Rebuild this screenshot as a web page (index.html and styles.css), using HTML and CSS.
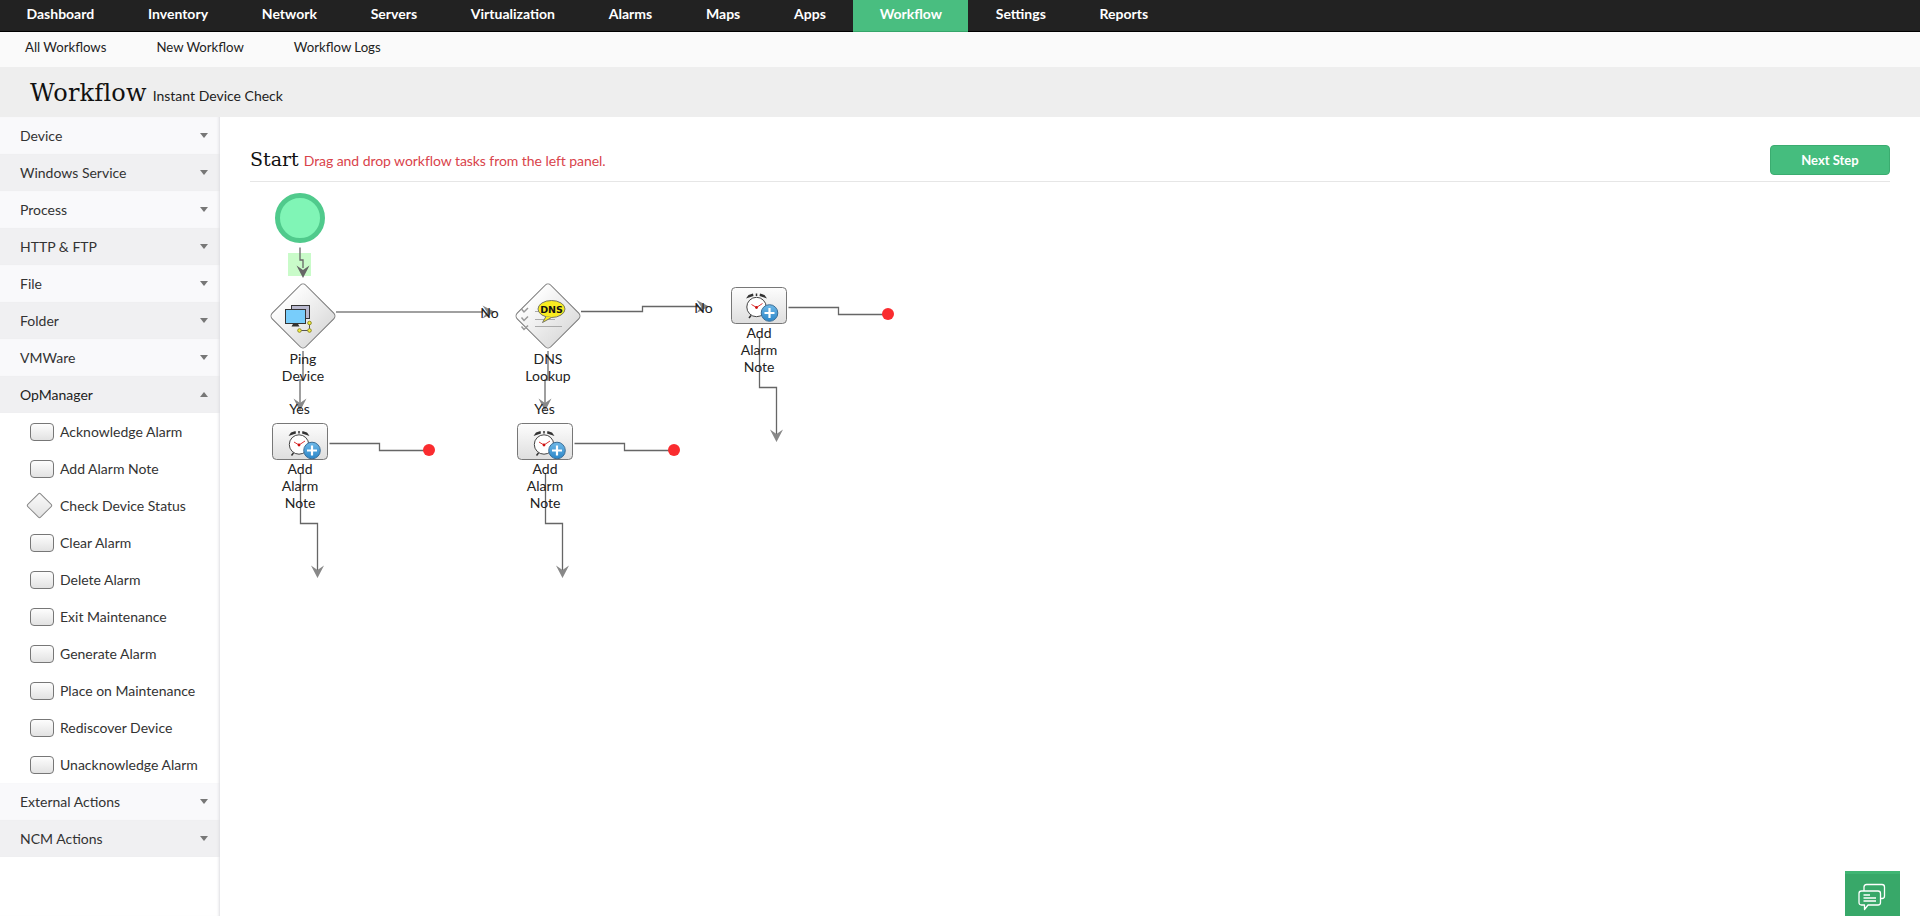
FILE: index.html
```html
<!DOCTYPE html>
<html lang="en">
<head>
    <meta charset="UTF-8">
    <meta name="viewport" content="width=device-width, initial-scale=1.0">
    <title>Workflow - Instant Device Check</title>
    <link rel="stylesheet" href="styles.css">
</head>
<body>
    <nav class="main-nav">
        <a>Dashboard</a>
        <a>Inventory</a>
        <a>Network</a>
        <a>Servers</a>
        <a>Virtualization</a>
        <a>Alarms</a>
        <a>Maps</a>
        <a>Apps</a>
        <a class="active">Workflow</a>
        <a>Settings</a>
        <a>Reports</a>
    </nav>
    <nav class="sub-nav">
        <a>All Workflows</a>
        <a>New Workflow</a>
        <a>Workflow Logs</a>
    </nav>
    <header class="page-title">
        <h1>Workflow</h1>
        <span>Instant Device Check</span>
    </header>

    <div class="content">
        <aside class="sidebar">
            <div class="group">Device</div>
            <div class="group alt">Windows Service</div>
            <div class="group">Process</div>
            <div class="group alt">HTTP &amp; FTP</div>
            <div class="group">File</div>
            <div class="group alt">Folder</div>
            <div class="group">VMWare</div>
            <div class="group alt open">OpManager</div>
            <div class="task"><i class="box"></i>Acknowledge Alarm</div>
            <div class="task"><i class="box"></i>Add Alarm Note</div>
            <div class="task"><i class="diamond"></i>Check Device Status</div>
            <div class="task"><i class="box"></i>Clear Alarm</div>
            <div class="task"><i class="box"></i>Delete Alarm</div>
            <div class="task"><i class="box"></i>Exit Maintenance</div>
            <div class="task"><i class="box"></i>Generate Alarm</div>
            <div class="task"><i class="box"></i>Place on Maintenance</div>
            <div class="task"><i class="box"></i>Rediscover Device</div>
            <div class="task"><i class="box"></i>Unacknowledge Alarm</div>
            <div class="group">External Actions</div>
            <div class="group alt">NCM Actions</div>
        </aside>

        <main class="editor">
            <div class="editor-head">
                <h2>Start</h2>
                <span class="hint">Drag and drop workflow tasks from the left panel.</span>
                <button class="next">Next Step</button>
            </div>

            <svg class="canvas" width="1700" height="734" viewBox="220 182 1700 734">
                <defs>
                    <linearGradient id="fill" x1="0" y1="0" x2="0" y2="1">
                        <stop offset="0" stop-color="#fdfdfd"/>
                        <stop offset="1" stop-color="#dedede"/>
                    </linearGradient>
                    <linearGradient id="fill-diamond" x1="0" y1="0" x2="1" y2="0">
                        <stop offset="0" stop-color="#fdfdfd"/>
                        <stop offset="1" stop-color="#dedede"/>
                    </linearGradient>
                    <linearGradient id="blue" x1="0" y1="0" x2="0" y2="1">
                        <stop offset="0" stop-color="#6fb9e8"/>
                        <stop offset="1" stop-color="#2b86c8"/>
                    </linearGradient>
                    <path id="arrow" d="M-6.500 -12.500L0 -8L6.500 -12.500L0 0Z"/>

                    <!-- decision node with its "yes" branch -->
                    <g id="decision">
                        <rect class="shape tilted" x="279.250" y="292.250" width="47.500" height="47.500" rx="4" transform="rotate(45 303 316)"/>
                    </g>
                    <g id="yes">
                        <path class="line soft" d="M303 351V380H300V403"/>
                        <use href="#arrow" class="head" x="300" y="411"/>
                    </g>

                    <g id="clock">
                        <circle cx="299" cy="444.500" r="9.700" fill="#fff" stroke="#444"/>
                        <path d="M288.500 436L291 432.500L295.500 431L296 433.500ZM309.500 436L307 432.500L302.500 431L302 433.500Z" fill="#333"/>
                        <path d="M299 431V433.500M293.500 453L291.500 455.500" stroke="#333" stroke-width="1.500"/>
                        <path d="M294 442L299 445L305 441" fill="none" stroke="#d33"/>
                        <circle cx="299" cy="445" r="1.400" fill="#c11"/>
                        <circle cx="312" cy="450.500" r="8.300" fill="url(#blue)" stroke="#3a6d96"/>
                        <path d="M312 445.500V455.500M307 450.500H317" stroke="#fff" stroke-width="2.200"/>
                    </g>

                    <!-- alarm note node with both exits -->
                    <g id="note">
                        <rect class="shape" x="272.500" y="423.500" width="55" height="36" rx="4"/>
                        <path class="line" d="M329.500 443.500H379.500V450.500H424"/>
                        <circle cx="429" cy="450" r="6" fill="#fa2c2f"/>
                        <path class="line" d="M300.500 474V523.500H317.500V570"/>
                        <use href="#arrow" class="head" x="317.500" y="578"/>
                        <text x="300" y="474">Add</text>
                        <text x="300" y="491">Alarm</text>
                        <text x="300" y="508">Note</text>
                    </g>
                </defs>

                <rect x="288" y="253" width="23" height="23" fill="#c9fbc9"/>
                <circle cx="300" cy="218" r="22.500" fill="#80f5b6" stroke="#50ca8c" stroke-width="5"/>
                <path class="line" d="M300 247.500V260H303V268"/>
                <use href="#arrow" class="head dark" x="303" y="278"/>

                <!-- ping device -->
                <use href="#decision"/>
                <rect x="291.500" y="305.500" width="18" height="13" fill="#b9b9cf" stroke="#333"/>
                <rect x="285.500" y="309.500" width="20" height="14" fill="#78cdfb" stroke="#333"/>
                <path d="M293 324H298L299.500 326.500H291.500Z" fill="#333"/>
                <path d="M309.500 323V330.500H299.500" fill="none" stroke="#555"/>
                <g fill="#f4ee3a" stroke="#8d8a2a">
                    <circle cx="309.500" cy="323" r="1.800"/>
                    <circle cx="309.500" cy="330.500" r="1.800"/>
                    <circle cx="299.500" cy="330.500" r="1.800"/>
                </g>
                <use href="#yes"/>
                <path class="line thick" d="M336 312H483"/>
                <use href="#arrow" class="head" transform="translate(495 312) rotate(-90)"/>
                <text x="303" y="364">Ping</text>
                <text x="303" y="381">Device</text>
                <text x="489.500" y="317.500">No</text>
                <text x="299.500" y="414">Yes</text>

                <!-- dns lookup -->
                <use href="#decision" x="245"/>
                <path d="M535 311.500H562M535 319.500H555M535 326.500H562" stroke="#aaa"/>
                <path d="M521.500 309L524 312L528 308M521.500 317.500L524 320.500L528 316.500M521.500 326.500L524 329.500L528 325.500" fill="none" stroke="#999" stroke-width="1.500"/>
                <ellipse cx="551.500" cy="309" rx="13.500" ry="8.500" fill="#f9ec20" stroke="#776"/>
                <path d="M546 316.500L542.500 322.500L551.500 317.500" fill="#f9ec20" stroke="#776"/>
                <text class="dns" x="551.500" y="313">DNS</text>
                <use href="#yes" x="245"/>
                <path class="line" d="M581 311.500H642.500V306.500H698"/>
                <use href="#arrow" class="head" transform="translate(709 306.500) rotate(-90)"/>
                <text x="548" y="364">DNS</text>
                <text x="548" y="381">Lookup</text>
                <text x="703.500" y="313">No</text>
                <text x="544.500" y="414">Yes</text>

                <use href="#note"/>
                <use href="#clock"/>
                <use href="#note" x="245"/>
                <use href="#clock" x="245"/>
                <use href="#note" x="459" y="-136"/>
                <use href="#clock" x="457.500" y="-137.500"/>
            </svg>
        </main>
    </div>

    <div class="chat">
        <svg width="28" height="28" viewBox="0 0 28 28" fill="none" stroke="#fff" stroke-width="1.300" stroke-linejoin="round">
            <path d="M6 8V4Q6 1.500 8.500 1.500H24Q26.500 1.500 26.500 4V13Q26.500 15.500 24 15.500H23"/>
            <path d="M3.500 8H20Q22.500 8 22.500 10.500V19.500Q22.500 22 20 22H10L6.500 26.500V22H3.500Q1 22 1 19.500V10.500Q1 8 3.500 8Z"/>
            <path d="M5.500 12H12M5.500 15H18M5.500 18H18"/>
        </svg>
    </div>
</body>
</html>
```
FILE: styles.css
```css
* {
    box-sizing: border-box;
}

body {
    margin: 0;
    height: 916px;
    overflow: hidden;
    display: flex;
    flex-direction: column;
    font-family: Lato, "Liberation Sans", sans-serif;
    font-size: 14px;
    color: #222;
    background: #fff;
}

h1,
h2 {
    margin: 0;
    font-family: "DejaVu Serif", serif;
    font-weight: normal;
    color: #111;
}

.main-nav {
    display: flex;
    gap: 0.8px;
    height: 32px;
    background: #222;
    border-bottom: 1px solid #000;
}

.main-nav a {
    height: 32px;
    padding: 0 26.5px;
    line-height: 28px;
    font-weight: bold;
    color: #fff;
}

.main-nav .active {
    background: #49be80;
    border-bottom: 1px solid #35a56a;
}

.sub-nav {
    display: flex;
    gap: 50px;
    height: 35px;
    padding-left: 25px;
    font-size: 13.2px;
    line-height: 30px;
    background: #fafafa;
}

.page-title {
    display: flex;
    align-items: baseline;
    gap: 6px;
    height: 50px;
    padding: 9px 0 0 30px;
    background: #eee;
}

.page-title h1 {
    font-size: 24px;
    line-height: 34px;
    letter-spacing: 0.2px;
}

.content {
    flex: 1;
    display: flex;
}

.sidebar {
    width: 220px;
    color: #333;
    box-shadow: inset -3px 0 3px -2px #dcdce0;
}

.group {
    display: flex;
    align-items: center;
    justify-content: space-between;
    height: 37px;
    padding: 0 12px 0 20px;
    background: #f9f9fb;
    box-shadow: inset -3px 0 3px -2px #dcdce0;
}

.group.alt {
    background: #f0f0f2;
}

.group.open {
    color: #222;
}

.group::after {
    content: "";
    border: 4px solid transparent;
    border-top: 5px solid #777;
    border-bottom: 0;
}

.group.open::after {
    border-top: 0;
    border-bottom: 5px solid #777;
}

.task {
    display: flex;
    align-items: center;
    gap: 6px;
    height: 37px;
    padding-left: 30px;
}

.box {
    width: 24px;
    height: 18px;
    border: 1px solid #777;
    border-radius: 4px;
    background: linear-gradient(#fdfdfd, #e2e2e2);
}

.diamond {
    width: 19px;
    height: 19px;
    margin: 0 5px 0 0;
    border: 1px solid #888;
    border-radius: 2px;
    background: linear-gradient(135deg, #fafafa, #e2e2e2);
    transform: rotate(45deg);
}

.editor {
    flex: 1;
}

.editor-head {
    display: flex;
    align-items: baseline;
    gap: 5px;
    height: 65px;
    margin: 0 30px;
    padding-top: 28px;
    border-bottom: 1px solid #e6e6e6;
}

.editor-head h2 {
    font-size: 19px;
    line-height: 28px;
}

.hint {
    letter-spacing: -0.06px;
    color: #d9434b;
}

.next {
    align-self: flex-start;
    width: 120px;
    height: 30px;
    margin-left: auto;
    padding: 0 0 1px;
    border: 1px solid #3bac70;
    border-radius: 4px;
    font: bold 13px Lato, sans-serif;
    color: #fff;
    background: #45bd7e;
}

.canvas {
    display: block;
}

.canvas text {
    font-size: 14px;
    text-anchor: middle;
    fill: #222;
}

.canvas .dns {
    font: bold 9.5px "DejaVu Sans", sans-serif;
    fill: #111;
}

.shape {
    fill: url(#fill);
    stroke: #777;
}

.tilted {
    fill: url(#fill-diamond);
}

.line {
    fill: none;
    stroke: #666;
    stroke-width: 1.3;
}

.soft {
    stroke: #888;
    stroke-width: 1.6;
}

.thick {
    stroke: #a0a0a0;
    stroke-width: 2;
}

.head {
    fill: #888;
}

.dark {
    fill: #666;
}

.chat {
    position: absolute;
    right: 20px;
    bottom: 0;
    width: 55px;
    height: 45px;
    padding: 9px 0 0 13px;
    background: #38a869;
    border-top: 3px solid #3fb573;
}
```
